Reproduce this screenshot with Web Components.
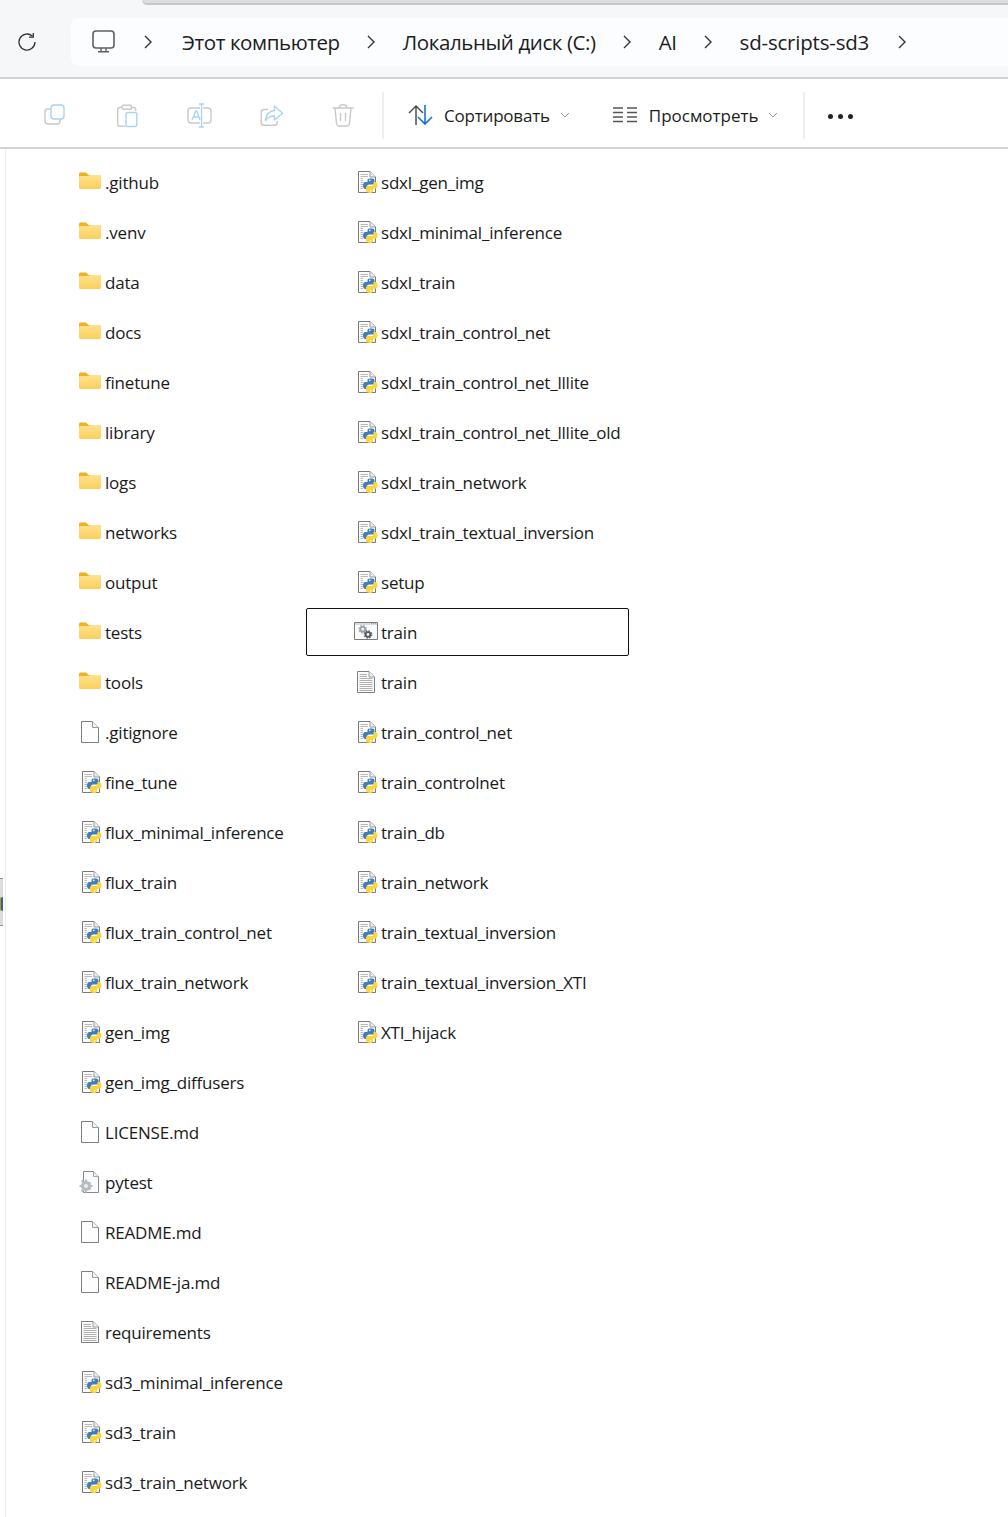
<!DOCTYPE html>
<html lang="ru"><head><meta charset="utf-8"><title>sd-scripts-sd3</title>
<style>
html,body{margin:0;padding:0;background:#fff;}
body{width:1008px;height:1517px;overflow:hidden;font-family:"Open Sans","Noto Sans",sans-serif;color:#1b1b1b;}
</style></head><body>
<explorer-window>
  <address-bar>
    <bread-crumb slot="crumbs">Этот компьютер</bread-crumb>
    <bread-crumb slot="crumbs">Локальный диск (C:)</bread-crumb>
    <bread-crumb slot="crumbs">AI</bread-crumb>
    <bread-crumb slot="crumbs" style="letter-spacing:-.2px;gap:29px">sd-scripts-sd3</bread-crumb>
  </address-bar>
  <command-bar></command-bar>
  <file-grid>
    <file-item icon="folder">.github</file-item>
    <file-item icon="folder">.venv</file-item>
    <file-item icon="folder">data</file-item>
    <file-item icon="folder">docs</file-item>
    <file-item icon="folder">finetune</file-item>
    <file-item icon="folder">library</file-item>
    <file-item icon="folder">logs</file-item>
    <file-item icon="folder">networks</file-item>
    <file-item icon="folder">output</file-item>
    <file-item icon="folder">tests</file-item>
    <file-item icon="folder">tools</file-item>
    <file-item icon="blank">.gitignore</file-item>
    <file-item icon="py">fine_tune</file-item>
    <file-item icon="py">flux_minimal_inference</file-item>
    <file-item icon="py">flux_train</file-item>
    <file-item icon="py">flux_train_control_net</file-item>
    <file-item icon="py">flux_train_network</file-item>
    <file-item icon="py">gen_img</file-item>
    <file-item icon="py">gen_img_diffusers</file-item>
    <file-item icon="blank">LICENSE.md</file-item>
    <file-item icon="ini">pytest</file-item>
    <file-item icon="blank">README.md</file-item>
    <file-item icon="blank">README-ja.md</file-item>
    <file-item icon="txt">requirements</file-item>
    <file-item icon="py">sd3_minimal_inference</file-item>
    <file-item icon="py">sd3_train</file-item>
    <file-item icon="py">sd3_train_network</file-item>
    <file-item icon="py">sdxl_gen_img</file-item>
    <file-item icon="py">sdxl_minimal_inference</file-item>
    <file-item icon="py">sdxl_train</file-item>
    <file-item icon="py">sdxl_train_control_net</file-item>
    <file-item icon="py">sdxl_train_control_net_lllite</file-item>
    <file-item icon="py">sdxl_train_control_net_lllite_old</file-item>
    <file-item icon="py">sdxl_train_network</file-item>
    <file-item icon="py">sdxl_train_textual_inversion</file-item>
    <file-item icon="py">setup</file-item>
    <file-item icon="exe" selected>train</file-item>
    <file-item icon="txt">train</file-item>
    <file-item icon="py">train_control_net</file-item>
    <file-item icon="py">train_controlnet</file-item>
    <file-item icon="py">train_db</file-item>
    <file-item icon="py">train_network</file-item>
    <file-item icon="py">train_textual_inversion</file-item>
    <file-item icon="py">train_textual_inversion_XTI</file-item>
    <file-item icon="py">XTI_hijack</file-item>
  </file-grid>
</explorer-window>
<script>
const lines=(x1,x2,ys,c)=>ys.map(y=>`<path d="M${x1} ${y}H${x2}" stroke="${c}" stroke-width="1"/>`).join('');
const gear=(x,y,c)=>`<circle cx="${x}" cy="${y}" r="2.300" fill="none" stroke="${c}" stroke-width="1.800"/><circle cx="${x}" cy="${y}" r="3.600" fill="none" stroke="${c}" stroke-width="1.400" stroke-dasharray="1.500 1.330"/>`;
const ICONS={
folder:`<path d="M1 4.2C1 3 1.6 2.5 2.5 2.5H8L10.5 5H21.5C22.4 5 23 5.6 23 6.500V9H1Z" fill="#efb024"/>
<path d="M1 7.5C1 6.6 1.6 6 2.5 6H10.5L12 5H21.5C22.4 5 23 5.6 23 6.500V17.5C23 18.4 22.400 19 21.5 19H2.500C1.600 19 1 18.400 1 17.500Z" fill="url(#fg)"/>
<defs><linearGradient id="fg" x1="0" y1="0" x2="0" y2="1"><stop offset="0" stop-color="#ffe28e"/><stop offset="1" stop-color="#fbcf5b"/></linearGradient></defs>`,
blank:`<path d="M3.500 1.500H14.500L20.500 7.500V22.500H3.500Z" fill="#fdfdfd" stroke="#7f7f7f"/><path d="M14.500 1.500V7.500H20.500" fill="#f6f6f6" stroke="#9a9a9a"/>`,
py:`<path d="M4.500 1.500H16L21.500 7V22.500H4.500Z" fill="#fbfbfb" stroke="#7a7a7a"/><path d="M16 1.500V7H21.500" fill="#eee" stroke="#999"/>
${lines(6.5,14,[4.5,6.5],'#b9b9b9')}${lines(6.5,9,[8.5,10.5,12.5,14.5,16.5,18.5],'#b9b9b9')}
<g transform="translate(4.500 1)"><path d="M13.500 7.500H11C9.600 7.500 9 8.200 9 9.500V11H6.800C5.400 11 4.500 12.200 4.500 14.500C4.500 16.800 5.400 18 6.800 18H8.500V15.800C8.500 14.400 9.400 13.500 10.800 13.500H14.200C15.400 13.500 16 12.800 16 11.600V9.500C16 8.200 15 7.500 13.500 7.500Z" fill="#3f7fb8"/><circle cx="11.300" cy="9.400" r=".8" fill="#fff"/></g>
<g transform="translate(1.500 0.200)"><path d="M18 11.800V13.600C18 15 17.100 15.900 15.800 15.900H12.300C11.100 15.900 10.500 16.600 10.500 17.700V20C10.500 21.300 11.800 22.800 14 22.800C16.400 22.800 17.500 21.800 17.500 20.200V18.500H19.500C21 18.500 22 17.200 22 15C22 12.800 21 11.800 19.600 11.800Z" fill="#ffd43b"/><circle cx="15.200" cy="20.600" r=".8" fill="#fff"/></g>`,
txt:`<path d="M3.500 1.500H15L20.500 7V22.500H3.500Z" fill="#fbfbfb" stroke="#7f7f7f"/><path d="M15 1.500V7H20.500" fill="#efefef" stroke="#9c9c9c"/>
${lines(5.5,13,[4.5,6.5],'#b0b0b0')}${lines(5.5,18.5,[8.5,10.5,12.5,14.5,16.5,18.5,20.5],'#b0b0b0')}`,
exe:`<path d="M.5 2.500H23.500V19.500H.5Z" fill="#fafafa" stroke="#7b7b7b"/><path d="M1 3H23V5H1Z" fill="#dcdcdc"/><path d="M17 3.600H22" stroke="#999" stroke-dasharray="1 1"/>
${gear(8.700,9.200,'#98a2ac')}${gear(14,14.500,'#5a5a5a')}`,
ini:`<path d="M5.500 1.500H15.500L20.500 6.500V22.500H5.500Z" fill="#fbfbfb" stroke="#8a8a8a"/><path d="M15.500 1.500V6.500H20.500" fill="#eee" stroke="#a5a5a5"/>
<circle cx="8" cy="16" r="5" fill="#b4bcc4"/><g fill="#b4bcc4"><path d="M7 9.500h2v2.500H7zM7 20h2v2.500H7zM1.500 15h2.500v2H1.500zM12 15h2.500v2H12z"/><path d="M2.800 11.200l1.500-1.500 1.700 1.700-1.500 1.500zM10 18.600l1.500-1.500 1.700 1.700-1.500 1.500zM2.800 20.800l1.700-1.700 1.500 1.500-1.700 1.700zM10 13.400l1.700-1.700 1.500 1.500-1.700 1.700z"/></g><circle cx="8" cy="16" r="2" fill="#e9edf0"/>`
};
const TOOLS={
copy:`<rect x="2" y="6" width="15" height="15" rx="3" fill="none" stroke="#c9c9c9" stroke-width="1.4"/><rect x="8" y="2" width="13" height="14" rx="3" fill="#fff" stroke="#a9d3f3" stroke-width="1.4"/>`,
paste:`<path d="M6.500 4.500H5C3.500 4.500 2.700 5.300 2.700 6.800V21C2.700 22.500 3.500 23.300 5 23.300H10M17 4.500H18.500C20 4.500 20.700 5.300 20.700 6.800V8" fill="none" stroke="#c9c9c9" stroke-width="1.4"/><rect x="7" y="2.300" width="9.500" height="4" rx="1.200" fill="none" stroke="#c9c9c9" stroke-width="1.4"/><rect x="11" y="9.500" width="10.800" height="14" rx="2" fill="#fff" stroke="#a9d3f3" stroke-width="1.4"/>`,
rename:`<rect x="1" y="5" width="23" height="15" rx="3" fill="none" stroke="#c9c9c9" stroke-width="1.4"/><rect x="13" y="3" width="3" height="19" fill="#fff"/><path d="M14.500 1V24M12 1H17M12 24H17" fill="none" stroke="#a9d3f3" stroke-width="1.300"/><path d="M5 17L8.800 8H9.800L13 17M6.300 14H12" fill="none" stroke="#a9d3f3" stroke-width="1.300"/>`,
share:`<path d="M9 6.500H5C3.500 6.500 2.200 7.600 2.200 9.200V19.500C2.200 21 3.500 22.300 5 22.300H15.500C17.200 22.300 18.300 21 18.300 19.500V18" fill="none" stroke="#c9c9c9" stroke-width="1.4"/><path d="M15.500 3L23.500 10.300L15.500 17V13C11 13 8.500 14.500 6.500 17.500C7 12 10 8 15.500 7.500Z" fill="#fff" stroke="#a9d3f3" stroke-width="1.4" stroke-linejoin="round"/>`,
del:`<path d="M1.500 5H22.500M8 5C8 3 9.500 1.800 12 1.800C14.500 1.800 16 3 16 5M4 5L5.500 20.500C5.700 22 6.700 23 8.200 23H15.800C17.300 23 18.300 22 18.500 20.500L20 5M9.500 10V18M14.500 10V18" fill="none" stroke="#c9c9c9" stroke-width="1.4"/>`
};
function def(name,css,html,extra){
  customElements.define(name,class extends HTMLElement{
    constructor(){super();this.attachShadow({mode:'open'}).innerHTML=`<style>${css}</style>${html}`;}
    connectedCallback(){extra&&extra.call(this);}
  });
}
const chev=`<svg width="8" height="14" viewBox="0 0 8 14"><path d="M1 1L7 7L1 13" fill="none" stroke="#333" stroke-width="1.4"/></svg>`;
const small=`<svg width="10" height="6" viewBox="0 0 10 6"><path d="M1 1L5 5L9 1" fill="none" stroke="#9a9a9a" stroke-width="1"/></svg>`;

def('explorer-window',`:host{display:block;position:relative;width:1008px;height:1517px;overflow:hidden}
.edge{position:absolute;left:0;top:878px;width:3px;height:48px;background:#dcdcdc;border-top:1px solid #999;border-bottom:1px solid #999;box-sizing:border-box}
.edge i{position:absolute;left:1px;top:18px;width:2px;height:14px;background:#2a66a8;border-radius:2px 0 0 2px;box-shadow:-1px 0 0 #c58a2a}`,
`<slot></slot><div class="edge"><i></i></div>`);

def('bread-crumb',`:host{display:flex;align-items:center;gap:27px;font-size:20.5px;line-height:30px;letter-spacing:-.4px;color:#1c1c1c}`,`<slot></slot>${chev}`);

def('address-bar',`:host{display:block;height:77px;background:#f6f7f9;border-bottom:2px solid #d2d3d5;position:relative}
.tab{height:3px;margin-left:142px;background:#dcdde1;border-bottom:2px solid #c6c7ca;border-bottom-left-radius:5px}
.row{display:flex;align-items:center;padding-left:17px;margin-top:13px;height:48px}
.reload{width:20px;height:20px;margin-right:34px;flex:none}
.pill{flex:1;height:48px;background:#fbfdfe;border-radius:8px 0 0 8px;display:flex;align-items:center;padding-left:21px;box-sizing:border-box}
.pc{margin-right:30px;display:flex;align-items:center;gap:28px}
.crumbs{display:flex;align-items:center;gap:28px}`,
`<div class="tab"></div><div class="row"><svg class="reload" viewBox="0 0 20 20"><path d="M15.500 4.200A8 8 0 1 0 18 10" fill="none" stroke="#333" stroke-width="1.300"/><path d="M16.300 1V5.200H12" fill="none" stroke="#333" stroke-width="1.300"/></svg>
<div class="pill"><div class="pc"><svg width="24" height="24" viewBox="0 0 24 24"><rect x="1" y="1" width="21" height="17" rx="3" fill="none" stroke="#5f5f5f" stroke-width="1.600"/><path d="M6 21.800H17M9 18V21.500M14 18V21.500" fill="none" stroke="#5f5f5f" stroke-width="1.400"/></svg>${chev}</div><div class="crumbs"><slot name="crumbs"></slot></div></div></div>`);

def('tool-button',`:host{display:flex;width:72px;height:48px;align-items:center;justify-content:center}`,`<svg width="25" height="25" viewBox="0 0 25 25"></svg>`,
function(){this.shadowRoot.querySelector('svg').innerHTML=TOOLS[this.getAttribute('icon')];});

def('menu-button',`:host{display:flex;align-items:center;font-size:17px;line-height:24px;letter-spacing:-.2px;color:#1c1c1c}
.t{margin-left:11px;margin-right:10px;position:relative;top:1px}`,`<slot name="i"></slot><span class="t"><slot></slot></span>${small}`);

def('command-bar',`:host{display:flex;align-items:center;height:64px;padding:4px 0 0 19px;border-bottom:2px solid #d2d3d5;background:#fff}
.div{width:2px;height:47px;background:#eeeeee;margin:0 24px 0 3px;flex:none}
.dots{display:flex;gap:5px;margin:2px 0 0 0}.dots i{width:5px;height:5px;border-radius:50%;background:#222}`,
`<tool-button icon="copy"></tool-button><tool-button icon="paste"></tool-button><tool-button icon="rename"></tool-button><tool-button icon="share"></tool-button><tool-button icon="del"></tool-button>
<div class="div"></div>
<menu-button><svg slot="i" width="25" height="24" viewBox="0 0 25 24"><path d="M8 22V3M1 10L8 3L15 10" fill="none" stroke="#444" stroke-width="1.400"/><path d="M17 2V21M10 14L17 21L24 14" fill="none" stroke="#0f78d4" stroke-width="1.600"/></svg>Сортировать</menu-button>
<div style="width:43px;flex:none"></div>
<menu-button style="letter-spacing:-.02px"><svg slot="i" width="25" height="18" viewBox="0 0 25 18"><path d="M0 2H10M0 6.500H10M0 11H10M0 15.500H10M14 2H24M14 6.500H24M14 11H24M14 15.500H24" stroke="#555" stroke-width="1.300"/></svg>Просмотреть</menu-button>
<div class="div" style="margin-left:25px;margin-right:23px"></div><div class="dots"><i></i><i></i><i></i></div>`);

def('file-grid',`:host{display:grid;grid-auto-flow:column;grid-template-rows:repeat(27,48px);row-gap:2px;grid-template-columns:276px 323px;justify-content:start;padding:9px 0 0 30px;position:relative}
.rail{position:absolute;left:5px;top:0;width:1px;height:1400px;background:#ececec}`,`<div class="rail"></div><slot></slot>`);

def('file-item',`:host{display:flex;align-items:center;height:48px;box-sizing:border-box;padding-left:48px;font-size:17px;letter-spacing:-.2px;color:#1a1a1a;white-space:nowrap}
:host([selected]){outline:1px solid #111;outline-offset:-1px;border-radius:2px}
svg{flex:none;margin-right:3px}`,`<svg width="24" height="24" viewBox="0 0 24 24"></svg><span><slot></slot></span>`,
function(){this.shadowRoot.querySelector('svg').innerHTML=ICONS[this.getAttribute('icon')];});
</script>
</body></html>
